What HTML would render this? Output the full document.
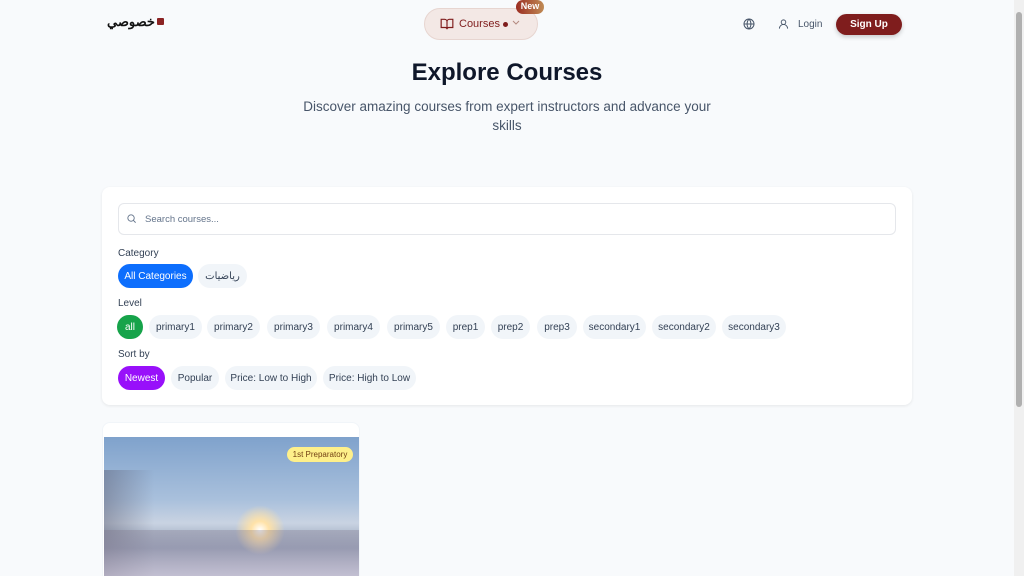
<!DOCTYPE html>
<html><head><meta charset="utf-8"><style>
*{box-sizing:border-box;margin:0;padding:0}
html,body{width:1024px;height:576px;overflow:hidden}
body{background:#f8fafc;font-family:"Liberation Sans","Noto Sans CJK SC",sans-serif;position:relative;color:#0f172a}
.abs{position:absolute}
.sb{position:absolute;right:0;top:0;width:10px;height:576px;background:#f0f0f0}
.sb i{position:absolute;left:2px;top:12px;width:6px;height:395px;background:#b0b0b0;border-radius:3px}
.chip{position:absolute;height:24px;display:flex;align-items:center;justify-content:center;border-radius:12px;background:#f1f5f9;color:#334155;font-size:10px;white-space:nowrap}
.lbl{position:absolute;left:118px;font-size:10px;color:#334155}
</style></head><body>
<div class="abs" style="left:107px;top:11px;font-size:13px;font-family:'Noto Sans CJK SC',sans-serif;font-weight:bold;color:#111">خصوصي</div>
<div class="abs" style="left:157px;top:18px;width:7px;height:7px;background:#8b2323;border-radius:1px"></div>
<div class="abs" style="left:424px;top:8px;width:114px;height:32px;border-radius:16px;background:#f3e8e5;border:1px solid #e7d5d0"></div>
<svg class="abs" style="left:440px;top:17px" width="14" height="14" viewBox="0 0 24 24" fill="none" stroke="#7f1d1d" stroke-width="2"><path d="M2 4h6a4 4 0 0 1 4 4v13a3 3 0 0 0-3-3H2z M22 4h-6a4 4 0 0 0-4 4v13a3 3 0 0 1 3-3h7z"/></svg>
<div class="abs" style="left:459px;top:18px;font-size:11px;color:#7f1d1d">Courses</div>
<div class="abs" style="left:503px;top:22px;width:5px;height:5px;border-radius:50%;background:#7f1d1d"></div>
<svg class="abs" style="left:512px;top:20px" width="8" height="6" viewBox="0 0 8 6" fill="none" stroke="#b48a80" stroke-width="1"><path d="M1 1l3 3 3-3"/></svg>
<div class="abs" style="left:516px;top:0;width:28px;height:14px;border-radius:7px;background:linear-gradient(90deg,#9b2d22,#c08b55);color:#fff;font-size:9px;font-weight:bold;text-align:center;line-height:13px">New</div>
<svg class="abs" style="left:743px;top:18px" width="12" height="12" viewBox="0 0 24 24" fill="none" stroke="#475569" stroke-width="2"><circle cx="12" cy="12" r="10"/><path d="M2 12h20M12 2a15 15 0 0 1 0 20M12 2a15 15 0 0 0 0 20"/></svg>
<svg class="abs" style="left:778px;top:18px" width="11" height="12" viewBox="0 0 24 24" fill="none" stroke="#475569" stroke-width="2"><circle cx="12" cy="8" r="5"/><path d="M3 22a9 9 0 0 1 18 0"/></svg>
<div class="abs" style="left:798px;top:19px;font-size:10px;color:#475569">Login</div>
<div class="abs" style="left:836px;top:14px;width:66px;height:21px;border-radius:11px;background:#7f1d1d;color:#fff;font-size:10px;font-weight:bold;text-align:center;line-height:21px;box-shadow:0 2px 5px rgba(0,0,0,.2)">Sign Up</div>
<div class="abs" style="left:0;width:1014px;top:59px;text-align:center;font-size:24px;font-weight:bold;color:#0f172a">Explore Courses</div>
<div class="abs" style="left:290px;width:434px;top:97px;text-align:center;font-size:13.5px;line-height:19px;color:#475569">Discover amazing courses from expert instructors and advance your skills</div>
<div class="abs" style="left:102px;top:187px;width:810px;height:218px;background:#fff;border-radius:8px;box-shadow:0 1px 3px rgba(0,0,0,.08)"></div>
<div class="abs" style="left:118px;top:203px;width:778px;height:32px;border:1px solid #e5e7eb;border-radius:6px"></div>
<svg class="abs" style="left:126px;top:213px" width="11" height="11" viewBox="0 0 24 24" fill="none" stroke="#64748b" stroke-width="2"><circle cx="11" cy="11" r="7"/><path d="M21 21l-5-5"/></svg>
<div class="abs" style="left:145px;top:214px;font-size:9.5px;color:#64748b">Search courses...</div>
<div class="lbl" style="top:248px">Category</div>
<div class="chip" style="left:118px;top:264px;width:75px;background:#0d6efd;color:#fff">All Categories</div>
<div class="chip" style="left:198px;top:264px;width:49px">رياضيات</div>
<div class="lbl" style="top:298px">Level</div>
<div class="chip" style="left:117px;top:315px;width:26px;background:#16a34a;color:#fff">all</div>
<div class="chip" style="left:149px;top:315px;width:53px">primary1</div>
<div class="chip" style="left:207px;top:315px;width:53px">primary2</div>
<div class="chip" style="left:267px;top:315px;width:53px">primary3</div>
<div class="chip" style="left:327px;top:315px;width:53px">primary4</div>
<div class="chip" style="left:387px;top:315px;width:53px">primary5</div>
<div class="chip" style="left:446px;top:315px;width:39px">prep1</div>
<div class="chip" style="left:491px;top:315px;width:39px">prep2</div>
<div class="chip" style="left:537px;top:315px;width:40px">prep3</div>
<div class="chip" style="left:583px;top:315px;width:63px">secondary1</div>
<div class="chip" style="left:652px;top:315px;width:64px">secondary2</div>
<div class="chip" style="left:722px;top:315px;width:64px">secondary3</div>
<div class="lbl" style="top:349px">Sort by</div>
<div class="chip" style="left:118px;top:366px;width:47px;background:#9810fa;color:#fff">Newest</div>
<div class="chip" style="left:171px;top:366px;width:48px">Popular</div>
<div class="chip" style="left:225px;top:366px;width:92px">Price: Low to High</div>
<div class="chip" style="left:323px;top:366px;width:93px">Price: High to Low</div>
<div class="abs" style="left:102px;top:422px;width:258px;height:160px;background:#fff;border-radius:8px;border:1px solid #f1f5f9"></div>
<div class="abs" style="left:104px;top:437px;width:255px;height:139px;background:linear-gradient(180deg,#7fa2cc 0%,#a9c0dc 45%,#c9d3e2 62%,#8e9bb3 80%,#b8bfcf 100%)"></div>
<div class="abs" style="left:104px;top:470px;width:50px;height:106px;background:linear-gradient(90deg,rgba(90,90,110,.45),rgba(150,150,170,0))"></div>
<div class="abs" style="left:235px;top:505px;width:50px;height:50px;border-radius:50%;background:radial-gradient(circle,#fff 0%,#ffe2a8 25%,rgba(255,220,170,0) 70%)"></div>
<div class="abs" style="left:104px;top:530px;width:255px;height:46px;background:linear-gradient(180deg,rgba(120,110,130,.3),rgba(200,190,210,.6))"></div>
<div class="abs" style="left:287px;top:447px;width:66px;height:15px;border-radius:8px;background:#fef08a;color:#713f12;font-size:8px;text-align:center;line-height:15px">1st Preparatory</div>
<div class="sb"><i></i></div>
</body></html>
